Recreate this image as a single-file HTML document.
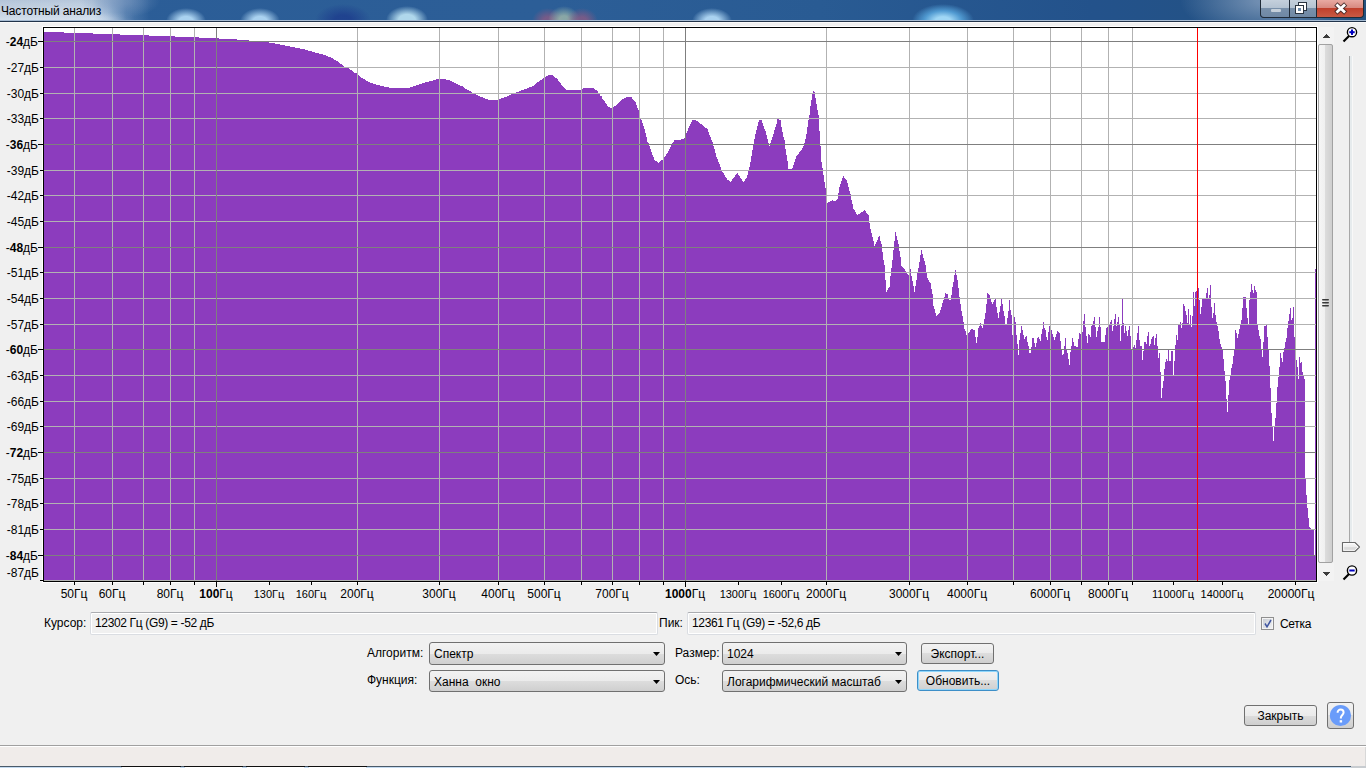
<!DOCTYPE html>
<html><head><meta charset="utf-8">
<style>
html,body{margin:0;padding:0;}
body{width:1366px;height:768px;overflow:hidden;position:relative;background:#f0f0f0;font-family:"Liberation Sans",sans-serif;font-size:12px;color:#000;}
.abs{position:absolute;}
.plot{position:absolute;left:0;top:0;}
/* title bar */
.tb{position:absolute;left:0;top:0;width:1366px;height:20px;overflow:hidden;
 background:#2b5b90;}
.tb .blob{position:absolute;border-radius:50%;}
.tbl1{position:absolute;left:0;top:20px;width:1366px;height:1px;background:#a6bbd2;}
.tbl2{position:absolute;left:0;top:21px;width:1366px;height:1px;background:#21334a;}
.title{position:absolute;left:1px;top:4px;font-size:12px;color:#000;white-space:nowrap;letter-spacing:-0.15px;}
.yl{position:absolute;left:0;width:39px;text-align:right;font-size:12px;line-height:16px;white-space:nowrap;}
.xl{position:absolute;top:586px;width:120px;text-align:center;font-size:12px;line-height:16px;white-space:nowrap;}
.xl.sm{font-size:11px;}
.lbl{position:absolute;font-size:12px;line-height:16px;white-space:nowrap;}
.field{position:absolute;box-sizing:border-box;border:1px solid #dadde2;border-top-color:#aaacb0;border-radius:2px;background:#f0f0f0;box-shadow:inset 0 0 0 1px #fff;}
.combo{position:absolute;box-sizing:border-box;border:1px solid #707070;border-radius:3px;
 background:linear-gradient(#f2f2f2 0%,#ebebeb 50%,#dddddd 50%,#cfcfcf 100%);}
.combo .arr{position:absolute;right:4px;top:9px;width:7px;height:4px;background:#000;clip-path:polygon(0 0,100% 0,50% 100%);}
.combo .txt{position:absolute;left:4px;top:3px;font-size:12px;line-height:16px;white-space:nowrap;}
.btn{position:absolute;box-sizing:border-box;border:1px solid #707070;border-radius:3px;text-align:center;font-size:12px;line-height:19px;padding-top:1px;
 background:linear-gradient(#f2f2f2 0%,#ebebeb 50%,#dddddd 50%,#cfcfcf 100%);}

.tb{background:linear-gradient(90deg,#2b5d97 0%,#2c5e97 40%,#295b93 60%,#23528b 80%,#24527f 100%);}
.tbtns{position:absolute;left:1260px;top:0;width:104px;height:18px;box-sizing:border-box;border:1px solid #1f2b38;border-top:none;border-radius:0 0 4px 4px;overflow:hidden;background:#1f2b38;}
.tbmin,.tbmax,.tbclose{position:absolute;top:0;height:17px;}
.tbmin{left:0;width:28px;background:linear-gradient(#c4d0dc 0%,#b4c3d2 45%,#7890aa 50%,#6f88a4 100%);}
.tbmax{left:29px;width:26px;background:linear-gradient(#c4d0dc 0%,#b4c3d2 45%,#7890aa 50%,#6f88a4 100%);}
.tbclose{left:56px;width:47px;background:linear-gradient(#e8aaa2 0%,#d88a80 45%,#c0402c 50%,#c85a44 100%);}
.ico-min{position:absolute;left:10px;top:9px;width:10px;height:3px;background:#c5d0da;border-radius:1px;}
.scr-btn{position:absolute;left:1318px;width:16px;background:#f3f3f3;}
.thumb{position:absolute;left:1318px;top:44px;width:15px;height:519px;box-sizing:border-box;border:1px solid #a2a2a2;border-radius:2px;
 background:linear-gradient(90deg,#f6f6f6 0%,#f0f0f0 45%,#dcdcdc 50%,#cfcfcf 100%);}
</style></head><body>
<div class="tb">
 <div class="abs" style="left:0;top:0;width:150px;height:20px;background:linear-gradient(90deg,rgba(196,210,226,1) 0%,rgba(200,214,230,1) 62%,rgba(185,205,228,.85) 72%,rgba(150,180,215,.35) 84%,rgba(150,180,215,0) 100%);"></div>
 <div class="abs" style="left:0;top:0;width:150px;height:20px;background:linear-gradient(rgba(150,172,200,.35) 0%,rgba(150,172,200,0) 45%,rgba(230,238,246,0) 60%,rgba(230,238,246,.45) 100%);-webkit-mask-image:linear-gradient(90deg,#000 0%,#000 65%,transparent 90%);mask-image:linear-gradient(90deg,#000 0%,#000 65%,transparent 90%);"></div>
 <div class="blob" style="left:80px;top:-16px;width:80px;height:34px;background:radial-gradient(closest-side,rgba(120,150,190,.6) 20%,rgba(120,150,190,0) 100%);"></div>
 <div class="blob" style="left:166px;top:8px;width:40px;height:26px;background:radial-gradient(closest-side,rgba(170,210,240,1) 35%,rgba(170,210,240,0) 100%);"></div>
 <div class="blob" style="left:240px;top:8px;width:40px;height:26px;background:radial-gradient(closest-side,rgba(170,210,240,1) 35%,rgba(170,210,240,0) 100%);"></div>
 <div class="blob" style="left:315px;top:4px;width:56px;height:32px;background:radial-gradient(closest-side,rgba(28,58,140,.75) 30%,rgba(28,58,140,0) 100%);"></div>
 <div class="blob" style="left:386px;top:6px;width:42px;height:28px;background:radial-gradient(closest-side,rgba(175,215,235,1) 40%,rgba(175,215,235,0) 100%);"></div>
 <div class="blob" style="left:532px;top:8px;width:32px;height:26px;background:radial-gradient(closest-side,rgba(150,90,130,.7) 30%,rgba(150,90,130,0) 100%);"></div>
 <div class="blob" style="left:548px;top:6px;width:32px;height:28px;background:radial-gradient(closest-side,rgba(160,185,170,.8) 30%,rgba(160,185,170,0) 100%);"></div>
 <div class="blob" style="left:566px;top:8px;width:32px;height:26px;background:radial-gradient(closest-side,rgba(150,90,130,.7) 30%,rgba(150,90,130,0) 100%);"></div>
 <div class="blob" style="left:692px;top:8px;width:40px;height:26px;background:radial-gradient(closest-side,rgba(170,210,240,1) 35%,rgba(170,210,240,0) 100%);"></div>
 <div class="blob" style="left:912px;top:4px;width:62px;height:34px;background:radial-gradient(closest-side,rgba(160,215,245,1) 25%,rgba(90,170,225,.8) 60%,rgba(90,170,225,0) 100%);"></div>
 <div class="blob" style="left:1180px;top:-40px;width:180px;height:80px;background:radial-gradient(closest-side,rgba(125,152,185,.85) 15%,rgba(125,152,185,0) 100%);"></div>
</div>
<div class="tbl1"></div><div class="tbl2"></div><div class="abs" style="left:0;top:22px;width:1366px;height:1px;background:#fbfaf9;"></div>
<div class="tbtns">
 <div class="tbmin"><div class="ico-min"></div></div>
 <div class="tbmax"><svg width="26" height="17" style="position:absolute;left:0;top:0" shape-rendering="crispEdges"><rect x="8.5" y="2.5" width="8" height="8" fill="#fff" stroke="#2a3440"/><rect x="5.5" y="5.5" width="8" height="8" fill="#fff" stroke="#2a3440"/><rect x="8" y="8" width="3" height="3" fill="#6c8aa8"/></svg></div>
 <div class="tbclose"><svg width="48" height="17" style="position:absolute;left:0;top:0"><path d="M20.5 5.5 L27 11.5 M27 5.5 L20.5 11.5" stroke="#3a2424" stroke-width="4.6" stroke-linecap="square" opacity="0.85"/><path d="M20.5 5.5 L27 11.5 M27 5.5 L20.5 11.5" stroke="#fff" stroke-width="2.8" stroke-linecap="square"/></svg></div>
</div>
<div class="title">Частотный анализ</div>

<svg class="plot" width="1366" height="600" viewBox="0 0 1366 600" shape-rendering="crispEdges">
<rect x="42" y="26" width="1276" height="557" fill="#fff"/>
<polygon points="44,32 45,32 45,32 46,32 46,32 47,32 47,32 48,32 48,32 49,32 49,32 50,32 50,32 51,32 51,32 52,32 52,32 53,32 53,32 54,32 54,32 55,32 55,32 56,32 56,32 57,32 57,32 58,32 58,32 59,32 59,32 60,32 60,32 61,32 61,32 62,32 62,32 63,32 63,32 64,32 64,33 65,33 65,33 66,33 66,33 67,33 67,33 68,33 68,33 69,33 69,33 70,33 70,33 71,33 71,33 72,33 72,33 73,33 73,33 74,33 74,33 75,33 75,33 76,33 76,33 77,33 77,33 78,33 78,33 79,33 79,33 80,33 80,33 81,33 81,33 82,33 82,33 83,33 83,33 84,33 84,33 85,33 85,33 86,33 86,33 87,33 87,33 88,33 88,33 89,33 89,33 90,33 90,33 91,33 91,33 92,33 92,33 93,33 93,34 94,34 94,34 95,34 95,34 96,34 96,34 97,34 97,34 98,34 98,34 99,34 99,34 100,34 100,34 101,34 101,34 102,34 102,34 103,34 103,34 104,34 104,34 105,34 105,34 106,34 106,34 107,34 107,34 108,34 108,34 109,34 109,34 110,34 110,34 111,34 111,34 112,34 112,34 113,34 113,34 114,34 114,34 115,34 115,34 116,34 116,34 117,34 117,34 118,34 118,34 119,34 119,34 120,34 120,35 121,35 121,35 122,35 122,35 123,35 123,35 124,35 124,35 125,35 125,35 126,35 126,35 127,35 127,35 128,35 128,35 129,35 129,35 130,35 130,35 131,35 131,35 132,35 132,35 133,35 133,35 134,35 134,35 135,35 135,35 136,35 136,35 137,35 137,35 138,35 138,35 139,35 139,35 140,35 140,35 141,35 141,35 142,35 142,35 143,35 143,35 144,35 144,35 145,35 145,35 146,35 146,35 147,35 147,35 148,35 148,35 149,35 149,36 150,36 150,36 151,36 151,36 152,36 152,36 153,36 153,36 154,36 154,36 155,36 155,36 156,36 156,36 157,36 157,36 158,36 158,36 159,36 159,36 160,36 160,36 161,36 161,36 162,36 162,36 163,36 163,36 164,36 164,36 165,36 165,36 166,36 166,36 167,36 167,36 168,36 168,36 169,36 169,36 170,36 170,36 171,36 171,36 172,36 172,36 173,36 173,36 174,36 174,36 175,36 175,37 176,37 176,37 177,37 177,37 178,37 178,37 179,37 179,37 180,37 180,37 181,37 181,37 182,37 182,37 183,37 183,37 184,37 184,37 185,37 185,37 186,37 186,37 187,37 187,37 188,37 188,37 189,37 189,37 190,37 190,37 191,37 191,37 192,37 192,37 193,37 193,37 194,37 194,37 195,37 195,37 196,37 196,37 197,37 197,37 198,37 198,37 199,37 199,38 200,38 200,38 201,38 201,38 202,38 202,38 203,38 203,38 204,38 204,38 205,38 205,38 206,38 206,38 207,38 207,38 208,38 208,38 209,38 209,38 210,38 210,38 211,38 211,38 212,38 212,38 213,38 213,38 214,38 214,38 215,38 215,38 216,38 216,38 217,38 217,38 218,38 218,38 219,38 219,39 220,39 220,39 221,39 221,39 222,39 222,39 223,39 223,39 224,39 224,39 225,39 225,39 226,39 226,39 227,39 227,39 228,39 228,39 229,39 229,39 230,39 230,39 231,39 231,39 232,39 232,39 233,39 233,39 234,39 234,39 235,39 235,39 236,39 236,39 237,39 237,40 238,40 238,40 239,40 239,40 240,40 240,40 241,40 241,40 242,40 242,40 243,40 243,40 244,40 244,40 245,40 245,40 246,40 246,40 247,40 247,40 248,40 248,40 249,40 249,41 250,41 250,41 251,41 251,41 252,41 252,41 253,41 253,41 254,41 254,41 255,41 255,41 256,41 256,41 257,41 257,41 258,41 258,41 259,41 259,41 260,41 260,41 261,41 261,41 262,41 262,41 263,41 263,41 264,41 264,41 265,41 265,41 266,41 266,41 267,41 267,41 268,41 268,41 269,41 269,43 270,43 270,43 271,43 271,43 272,43 272,43 273,43 273,43 274,43 274,43 275,43 275,44 276,44 276,44 277,44 277,44 278,44 278,44 279,44 279,44 280,44 280,45 281,45 281,45 282,45 282,45 283,45 283,45 284,45 284,45 285,45 285,46 286,46 286,46 287,46 287,46 288,46 288,46 289,46 289,46 290,46 290,47 291,47 291,47 292,47 292,47 293,47 293,47 294,47 294,47 295,47 295,48 296,48 296,48 297,48 297,48 298,48 298,48 299,48 299,48 300,48 300,49 301,49 301,49 302,49 302,49 303,49 303,49 304,49 304,49 305,49 305,50 306,50 306,50 307,50 307,50 308,50 308,51 309,51 309,51 310,51 310,51 311,51 311,51 312,51 312,52 313,52 313,52 314,52 314,52 315,52 315,53 316,53 316,53 317,53 317,53 318,53 318,53 319,53 319,54 320,54 320,54 321,54 321,54 322,54 322,54 323,54 323,55 324,55 324,55 325,55 325,55 326,55 326,56 327,56 327,56 328,56 328,57 329,57 329,57 330,57 330,57 331,57 331,58 332,58 332,58 333,58 333,59 334,59 334,60 335,60 335,60 336,60 336,61 337,61 337,61 338,61 338,62 339,62 339,63 340,63 340,64 341,64 341,64 342,64 342,65 343,65 343,66 344,66 344,67 345,67 345,67 346,67 346,67 347,67 347,68 348,68 348,68 349,68 349,69 350,69 350,70 351,70 351,70 352,70 352,71 353,71 353,72 354,72 354,73 355,73 355,73 356,73 356,73 357,73 357,74 358,74 358,75 359,75 359,76 360,76 360,77 361,77 361,78 362,78 362,78 363,78 363,79 364,79 364,79 365,79 365,80 366,80 366,81 367,81 367,81 368,81 368,82 369,82 369,82 370,82 370,83 371,83 371,83 372,83 372,83 373,83 373,84 374,84 374,84 375,84 375,84 376,84 376,85 377,85 377,85 378,85 378,85 379,85 379,85 380,85 380,86 381,86 381,86 382,86 382,86 383,86 383,86 384,86 384,87 385,87 385,87 386,87 386,87 387,87 387,87 388,87 388,87 389,87 389,88 390,88 390,88 391,88 391,88 392,88 392,88 393,88 393,88 394,88 394,88 395,88 395,88 396,88 396,88 397,88 397,88 398,88 398,88 399,88 399,88 400,88 400,88 401,88 401,88 402,88 402,88 403,88 403,88 404,88 404,88 405,88 405,88 406,88 406,88 407,88 407,88 408,88 408,88 409,88 409,88 410,88 410,87 411,87 411,87 412,87 412,87 413,87 413,86 414,86 414,86 415,86 415,86 416,86 416,85 417,85 417,85 418,85 418,85 419,85 419,84 420,84 420,84 421,84 421,84 422,84 422,83 423,83 423,83 424,83 424,83 425,83 425,82 426,82 426,82 427,82 427,82 428,82 428,82 429,82 429,81 430,81 430,81 431,81 431,81 432,81 432,81 433,81 433,80 434,80 434,80 435,80 435,80 436,80 436,79 437,79 437,79 438,79 438,79 439,79 439,79 440,79 440,79 441,79 441,79 442,79 442,79 443,79 443,79 444,79 444,79 445,79 445,79 446,79 446,80 447,80 447,80 448,80 448,80 449,80 449,80 450,80 450,81 451,81 451,81 452,81 452,82 453,82 453,82 454,82 454,83 455,83 455,83 456,83 456,84 457,84 457,84 458,84 458,85 459,85 459,85 460,85 460,86 461,86 461,86 462,86 462,86 463,86 463,87 464,87 464,88 465,88 465,89 466,89 466,89 467,89 467,90 468,90 468,90 469,90 469,91 470,91 470,91 471,91 471,92 472,92 472,93 473,93 473,93 474,93 474,94 475,94 475,94 476,94 476,95 477,95 477,95 478,95 478,96 479,96 479,96 480,96 480,97 481,97 481,97 482,97 482,97 483,97 483,98 484,98 484,98 485,98 485,99 486,99 486,99 487,99 487,99 488,99 488,100 489,100 489,100 490,100 490,100 491,100 491,100 492,100 492,100 493,100 493,100 494,100 494,100 495,100 495,100 496,100 496,100 497,100 497,100 498,100 498,100 499,100 499,99 500,99 500,99 501,99 501,98 502,98 502,98 503,98 503,98 504,98 504,97 505,97 505,97 506,97 506,97 507,97 507,96 508,96 508,96 509,96 509,95 510,95 510,95 511,95 511,94 512,94 512,94 513,94 513,93 514,93 514,93 515,93 515,93 516,93 516,92 517,92 517,92 518,92 518,92 519,92 519,91 520,91 520,91 521,91 521,90 522,90 522,90 523,90 523,90 524,90 524,89 525,89 525,89 526,89 526,89 527,89 527,88 528,88 528,88 529,88 529,87 530,87 530,87 531,87 531,87 532,87 532,86 533,86 533,86 534,86 534,85 535,85 535,84 536,84 536,83 537,83 537,82 538,82 538,82 539,82 539,81 540,81 540,80 541,80 541,80 542,80 542,79 543,79 543,78 544,78 544,78 545,78 545,77 546,77 546,76 547,76 547,76 548,76 548,75 549,75 549,75 550,75 550,75 551,75 551,75 552,75 552,75 553,75 553,76 554,76 554,77 555,77 555,78 556,78 556,78 557,78 557,79 558,79 558,81 559,81 559,82 560,82 560,83 561,83 561,85 562,85 562,86 563,86 563,87 564,87 564,88 565,88 565,89 566,89 566,90 567,90 567,90 568,90 568,90 569,90 569,90 570,90 570,90 571,90 571,90 572,90 572,90 573,90 573,90 574,90 574,90 575,90 575,90 576,90 576,90 577,90 577,90 578,90 578,90 579,90 579,90 580,90 580,90 581,90 581,89 582,89 582,89 583,89 583,88 584,88 584,88 585,88 585,88 586,88 586,88 587,88 587,88 588,88 588,88 589,88 589,88 590,88 590,88 591,88 591,88 592,88 592,88 593,88 593,88 594,88 594,89 595,89 595,90 596,90 596,90 597,90 597,91 598,91 598,93 599,93 599,94 600,94 600,96 601,96 601,96 602,96 602,99 603,99 603,100 604,100 604,101 605,101 605,103 606,103 606,104 607,104 607,106 608,106 608,107 609,107 609,107 610,107 610,108 611,108 611,108 612,108 612,108 613,108 613,107 614,107 614,106 615,106 615,106 616,106 616,105 617,105 617,104 618,104 618,103 619,103 619,102 620,102 620,101 621,101 621,100 622,100 622,99 623,99 623,99 624,99 624,98 625,98 625,98 626,98 626,97 627,97 627,97 628,97 628,97 629,97 629,97 630,97 630,97 631,97 631,97 632,97 632,99 633,99 633,100 634,100 634,101 635,101 635,102 636,102 636,105 637,105 637,108 638,108 638,110 639,110 639,114 640,114 640,118 641,118 641,120 642,120 642,123 643,123 643,126 644,126 644,129 645,129 645,133 646,133 646,137 647,137 647,142 648,142 648,143 649,143 649,146 650,146 650,149 651,149 651,152 652,152 652,155 653,155 653,157 654,157 654,160 655,160 655,161 656,161 656,161 657,161 657,162 658,162 658,163 659,163 659,162 660,162 660,161 661,161 661,160 662,160 662,160 663,160 663,158 664,158 664,157 665,157 665,156 666,156 666,154 667,154 667,153 668,153 668,151 669,151 669,149 670,149 670,147 671,147 671,145 672,145 672,143 673,143 673,142 674,142 674,140 675,140 675,140 676,140 676,140 677,140 677,140 678,140 678,140 679,140 679,140 680,140 680,140 681,140 681,139 682,139 682,139 683,139 683,139 684,139 684,138 685,138 685,137 686,137 686,133 687,133 687,131 688,131 688,128 689,128 689,126 690,126 690,124 691,124 691,122 692,122 692,120 693,120 693,120 694,120 694,120 695,120 695,120 696,120 696,121 697,121 697,121 698,121 698,122 699,122 699,123 700,123 700,124 701,124 701,124 702,124 702,125 703,125 703,126 704,126 704,127 705,127 705,128 706,128 706,128 707,128 707,129 708,129 708,132 709,132 709,135 710,135 710,137 711,137 711,140 712,140 712,142 713,142 713,146 714,146 714,149 715,149 715,153 716,153 716,157 717,157 717,159 718,159 718,162 719,162 719,164 720,164 720,167 721,167 721,170 722,170 722,172 723,172 723,173 724,173 724,175 725,175 725,177 726,177 726,178 727,178 727,180 728,180 728,180 729,180 729,181 730,181 730,182 731,182 731,181 732,181 732,179 733,179 733,178 734,178 734,177 735,177 735,175 736,175 736,174 737,174 737,173 738,173 738,175 739,175 739,176 740,176 740,178 741,178 741,179 742,179 742,181 743,181 743,182 744,182 744,181 745,181 745,179 746,179 746,178 747,178 747,175 748,175 748,171 749,171 749,167 750,167 750,162 751,162 751,156 752,156 752,150 753,150 753,144 754,144 754,139 755,139 755,134 756,134 756,130 757,130 757,126 758,126 758,122 759,122 759,120 760,120 760,120 761,120 761,120 762,120 762,123 763,123 763,126 764,126 764,129 765,129 765,131 766,131 766,135 767,135 767,139 768,139 768,143 769,143 769,146 770,146 770,143 771,143 771,140 772,140 772,137 773,137 773,134 774,134 774,130 775,130 775,127 776,127 776,124 777,124 777,119 778,119 778,119 779,119 779,120 780,120 780,120 781,120 781,127 782,127 782,132 783,132 783,137 784,137 784,140 785,140 785,149 786,149 786,155 787,155 787,161 788,161 788,169 789,169 789,169 790,169 790,169 791,169 791,169 792,169 792,168 793,168 793,165 794,165 794,162 795,162 795,159 796,159 796,156 797,156 797,155 798,155 798,154 799,154 799,152 800,152 800,151 801,151 801,150 802,150 802,148 803,148 803,146 804,146 804,143 805,143 805,139 806,139 806,134 807,134 807,127 808,127 808,120 809,120 809,115 810,115 810,106 811,106 811,100 812,100 812,94 813,94 813,91 814,91 814,92 815,92 815,98 816,98 816,104 817,104 817,110 818,110 818,115 819,115 819,131 820,131 820,146 821,146 821,162 822,162 822,168 823,168 823,175 824,175 824,182 825,182 825,188 826,188 826,193 827,193 827,203 828,203 828,202 829,202 829,202 830,202 830,201 831,201 831,201 832,201 832,200 833,200 833,201 834,201 834,201 835,201 835,201 836,201 836,200 837,200 837,199 838,199 838,193 839,193 839,187 840,187 840,184 841,184 841,181 842,181 842,178 843,178 843,176 844,176 844,178 845,178 845,179 846,179 846,180 847,180 847,183 848,183 848,187 849,187 849,191 850,191 850,194 851,194 851,200 852,200 852,204 853,204 853,209 854,209 854,210 855,210 855,212 856,212 856,214 857,214 857,215 858,215 858,214 859,214 859,214 860,214 860,213 861,213 861,212 862,212 862,212 863,212 863,211 864,211 864,210 865,210 865,211 866,211 866,213 867,213 867,214 868,214 868,215 869,215 869,223 870,223 870,229 871,229 871,233 872,233 872,237 873,237 873,241 874,241 874,246 875,246 875,244 876,244 876,242 877,242 877,240 878,240 878,237 879,237 879,236 880,236 880,241 881,241 881,244 882,244 882,252 883,252 883,260 884,260 884,265 885,265 885,280 886,280 886,292 887,292 887,290 888,290 888,288 889,288 889,287 890,287 890,276 891,276 891,268 892,268 892,260 893,260 893,250 894,250 894,241 895,241 895,232 896,232 896,236 897,236 897,240 898,240 898,244 899,244 899,251 900,251 900,257 901,257 901,266 902,266 902,267 903,267 903,268 904,268 904,269 905,269 905,271 906,271 906,272 907,272 907,274 908,274 908,275 909,275 909,271 910,271 910,269 911,269 911,276 912,276 912,281 913,281 913,286 914,286 914,292 915,292 915,286 916,286 916,280 917,280 917,272 918,272 918,268 919,268 919,262 920,262 920,255 921,255 921,250 922,250 922,254 923,254 923,258 924,258 924,261 925,261 925,265 926,265 926,272 927,272 927,278 928,278 928,280 929,280 929,282 930,282 930,283 931,283 931,289 932,289 932,294 933,294 933,306 934,306 934,309 935,309 935,313 936,313 936,316 937,316 937,315 938,315 938,314 939,314 939,313 940,313 940,310 941,310 941,307 942,307 942,303 943,303 943,300 944,300 944,297 945,297 945,293 946,293 946,294 947,294 947,294 948,294 948,299 949,299 949,300 950,300 950,300 951,300 951,295 952,295 952,287 953,287 953,282 954,282 954,275 955,275 955,270 956,270 956,275 957,275 957,280 958,280 958,288 959,288 959,297 960,297 960,304 961,304 961,311 962,311 962,316 963,316 963,322 964,322 964,329 965,329 965,331 966,331 966,335 967,335 967,336 968,336 968,333 969,333 969,332 970,332 970,330 971,330 971,329 972,329 972,329 973,329 973,330 974,330 974,330 975,330 975,337 976,337 976,343 977,343 977,337 978,337 978,328 979,328 979,326 980,326 980,323 981,323 981,326 982,326 982,328 983,328 983,324 984,324 984,319 985,319 985,313 986,313 986,304 987,304 987,293 988,293 988,294 989,294 989,295 990,295 990,298 991,298 991,302 992,302 992,304 993,304 993,302 994,302 994,300 995,300 995,299 996,299 996,307 997,307 997,313 998,313 998,318 999,318 999,312 1000,312 1000,306 1001,306 1001,299 1002,299 1002,304 1003,304 1003,311 1004,311 1004,316 1005,316 1005,324 1006,324 1006,324 1007,324 1007,318 1008,318 1008,311 1009,311 1009,300 1010,300 1010,310 1011,310 1011,315 1012,315 1012,335 1013,335 1013,324 1014,324 1014,317 1015,317 1015,322 1016,322 1016,335 1017,335 1017,344 1018,344 1018,355 1019,355 1019,340 1020,340 1020,333 1021,333 1021,326 1022,326 1022,330 1023,330 1023,335 1024,335 1024,339 1025,339 1025,337 1026,337 1026,336 1027,336 1027,342 1028,342 1028,346 1029,346 1029,353 1030,353 1030,353 1031,353 1031,347 1032,347 1032,338 1033,338 1033,338 1034,338 1034,343 1035,343 1035,347 1036,347 1036,343 1037,343 1037,338 1038,338 1038,337 1039,337 1039,339 1040,339 1040,341 1041,341 1041,334 1042,334 1042,329 1043,329 1043,322 1044,322 1044,328 1045,328 1045,330 1046,330 1046,337 1047,337 1047,340 1048,340 1048,332 1049,332 1049,326 1050,326 1050,328 1051,328 1051,330 1052,330 1052,334 1053,334 1053,337 1054,337 1054,340 1055,340 1055,337 1056,337 1056,334 1057,334 1057,331 1058,331 1058,332 1059,332 1059,333 1060,333 1060,341 1061,341 1061,349 1062,349 1062,355 1063,355 1063,354 1064,354 1064,346 1065,346 1065,338 1066,338 1066,349 1067,349 1067,353 1068,353 1068,359 1069,359 1069,365 1070,365 1070,352 1071,352 1071,346 1072,346 1072,338 1073,338 1073,342 1074,342 1074,346 1075,346 1075,346 1076,346 1076,347 1077,347 1077,347 1078,347 1078,339 1079,339 1079,333 1080,333 1080,334 1081,334 1081,334 1082,334 1082,332 1083,332 1083,321 1084,321 1084,314 1085,314 1085,327 1086,327 1086,336 1087,336 1087,343 1088,343 1088,334 1089,334 1089,335 1090,335 1090,337 1091,337 1091,326 1092,326 1092,324 1093,324 1093,321 1094,321 1094,317 1095,317 1095,327 1096,327 1096,337 1097,337 1097,331 1098,331 1098,327 1099,327 1099,317 1100,317 1100,327 1101,327 1101,342 1102,342 1102,342 1103,342 1103,342 1104,342 1104,342 1105,342 1105,335 1106,335 1106,328 1107,328 1107,327 1108,327 1108,326 1109,326 1109,325 1110,325 1110,322 1111,322 1111,320 1112,320 1112,331 1113,331 1113,326 1114,326 1114,319 1115,319 1115,314 1116,314 1116,326 1117,326 1117,322 1118,322 1118,317 1119,317 1119,325 1120,325 1120,341 1121,341 1121,326 1122,326 1122,299 1123,299 1123,323 1124,323 1124,333 1125,333 1125,326 1126,326 1126,331 1127,331 1127,336 1128,336 1128,330 1129,330 1129,326 1130,326 1130,336 1131,336 1131,349 1132,349 1132,349 1133,349 1133,347 1134,347 1134,345 1135,345 1135,348 1136,348 1136,340 1137,340 1137,333 1138,333 1138,326 1139,326 1139,340 1140,340 1140,346 1141,346 1141,346 1142,346 1142,360 1143,360 1143,351 1144,351 1144,342 1145,342 1145,342 1146,342 1146,344 1147,344 1147,336 1148,336 1148,332 1149,332 1149,346 1150,346 1150,344 1151,344 1151,339 1152,339 1152,337 1153,337 1153,336 1154,336 1154,345 1155,345 1155,338 1156,338 1156,334 1157,334 1157,346 1158,346 1158,358 1159,358 1159,353 1160,353 1160,372 1161,372 1161,398 1162,398 1162,388 1163,388 1163,381 1164,381 1164,369 1165,369 1165,362 1166,362 1166,359 1167,359 1167,361 1168,361 1168,350 1169,350 1169,361 1170,361 1170,361 1171,361 1171,351 1172,351 1172,351 1173,351 1173,375 1174,375 1174,361 1175,361 1175,345 1176,345 1176,335 1177,335 1177,340 1178,340 1178,325 1179,325 1179,325 1180,325 1180,322 1181,322 1181,328 1182,328 1182,323 1183,323 1183,304 1184,304 1184,306 1185,306 1185,311 1186,311 1186,315 1187,315 1187,323 1188,323 1188,309 1189,309 1189,324 1190,324 1190,315 1191,315 1191,327 1192,327 1192,316 1193,316 1193,292 1194,292 1194,306 1195,306 1195,292 1196,292 1196,291 1197,291 1197,290 1198,290 1198,288 1199,288 1199,300 1200,300 1200,314 1201,314 1201,307 1202,307 1202,299 1203,299 1203,299 1204,299 1204,299 1205,299 1205,299 1206,299 1206,293 1207,293 1207,288 1208,288 1208,298 1209,298 1209,295 1210,295 1210,285 1211,285 1211,307 1212,307 1212,318 1213,318 1213,313 1214,313 1214,303 1215,303 1215,315 1216,315 1216,322 1217,322 1217,326 1218,326 1218,331 1219,331 1219,339 1220,339 1220,344 1221,344 1221,347 1222,347 1222,350 1223,350 1223,359 1224,359 1224,371 1225,371 1225,381 1226,381 1226,399 1227,399 1227,412 1228,412 1228,395 1229,395 1229,380 1230,380 1230,376 1231,376 1231,368 1232,368 1232,364 1233,364 1233,356 1234,356 1234,350 1235,350 1235,330 1236,330 1236,333 1237,333 1237,338 1238,338 1238,334 1239,334 1239,329 1240,329 1240,324 1241,324 1241,320 1242,320 1242,308 1243,308 1243,297 1244,297 1244,297 1245,297 1245,297 1246,297 1246,308 1247,308 1247,318 1248,318 1248,325 1249,325 1249,300 1250,300 1250,292 1251,292 1251,284 1252,284 1252,290 1253,290 1253,293 1254,293 1254,286 1255,286 1255,290 1256,290 1256,292 1257,292 1257,325 1258,325 1258,330 1259,330 1259,336 1260,336 1260,339 1261,339 1261,350 1262,350 1262,357 1263,357 1263,342 1264,342 1264,326 1265,326 1265,326 1266,326 1266,325 1267,325 1267,337 1268,337 1268,350 1269,350 1269,366 1270,366 1270,388 1271,388 1271,413 1272,413 1272,426 1273,426 1273,441 1274,441 1274,427 1275,427 1275,418 1276,418 1276,403 1277,403 1277,387 1278,387 1278,377 1279,377 1279,367 1280,367 1280,353 1281,353 1281,358 1282,358 1282,362 1283,362 1283,352 1284,352 1284,348 1285,348 1285,342 1286,342 1286,338 1287,338 1287,328 1288,328 1288,321 1289,321 1289,314 1290,314 1290,308 1291,308 1291,320 1292,320 1292,318 1293,318 1293,307 1294,307 1294,337 1295,337 1295,349 1296,349 1296,360 1297,360 1297,367 1298,367 1298,379 1299,379 1299,357 1300,357 1300,363 1301,363 1301,362 1302,362 1302,372 1303,372 1303,375 1304,375 1304,379 1305,379 1305,479 1306,479 1306,495 1307,495 1307,508 1308,508 1308,518 1309,518 1309,527 1310,527 1310,528 1311,528 1311,529 1312,529 1312,529 1313,529 1313,529 1314,529 1314,555 1315,555 1315,269 1316,269 1316,581 44,581" fill="#8c3cbe"/>
<rect x="44" y="67" width="1272" height="1" fill="#b2b2b2"/>
<rect x="44" y="93" width="1272" height="1" fill="#b2b2b2"/>
<rect x="44" y="118" width="1272" height="1" fill="#b2b2b2"/>
<rect x="44" y="170" width="1272" height="1" fill="#b2b2b2"/>
<rect x="44" y="195" width="1272" height="1" fill="#b2b2b2"/>
<rect x="44" y="221" width="1272" height="1" fill="#b2b2b2"/>
<rect x="44" y="272" width="1272" height="1" fill="#b2b2b2"/>
<rect x="44" y="298" width="1272" height="1" fill="#b2b2b2"/>
<rect x="44" y="324" width="1272" height="1" fill="#b2b2b2"/>
<rect x="44" y="375" width="1272" height="1" fill="#b2b2b2"/>
<rect x="44" y="401" width="1272" height="1" fill="#b2b2b2"/>
<rect x="44" y="426" width="1272" height="1" fill="#b2b2b2"/>
<rect x="44" y="478" width="1272" height="1" fill="#b2b2b2"/>
<rect x="44" y="503" width="1272" height="1" fill="#b2b2b2"/>
<rect x="44" y="529" width="1272" height="1" fill="#b2b2b2"/>
<rect x="44" y="580" width="1272" height="1" fill="#b2b2b2"/>
<rect x="74" y="28" width="1" height="553" fill="#b2b2b2"/>
<rect x="112" y="28" width="1" height="553" fill="#b2b2b2"/>
<rect x="143" y="28" width="1" height="553" fill="#b2b2b2"/>
<rect x="170" y="28" width="1" height="553" fill="#b2b2b2"/>
<rect x="194" y="28" width="1" height="553" fill="#b2b2b2"/>
<rect x="357" y="28" width="1" height="553" fill="#b2b2b2"/>
<rect x="439" y="28" width="1" height="553" fill="#b2b2b2"/>
<rect x="498" y="28" width="1" height="553" fill="#b2b2b2"/>
<rect x="544" y="28" width="1" height="553" fill="#b2b2b2"/>
<rect x="581" y="28" width="1" height="553" fill="#b2b2b2"/>
<rect x="612" y="28" width="1" height="553" fill="#b2b2b2"/>
<rect x="639" y="28" width="1" height="553" fill="#b2b2b2"/>
<rect x="663" y="28" width="1" height="553" fill="#b2b2b2"/>
<rect x="826" y="28" width="1" height="553" fill="#b2b2b2"/>
<rect x="909" y="28" width="1" height="553" fill="#b2b2b2"/>
<rect x="967" y="28" width="1" height="553" fill="#b2b2b2"/>
<rect x="1013" y="28" width="1" height="553" fill="#b2b2b2"/>
<rect x="1050" y="28" width="1" height="553" fill="#b2b2b2"/>
<rect x="1081" y="28" width="1" height="553" fill="#b2b2b2"/>
<rect x="1108" y="28" width="1" height="553" fill="#b2b2b2"/>
<rect x="1132" y="28" width="1" height="553" fill="#b2b2b2"/>
<rect x="1295" y="28" width="1" height="553" fill="#b2b2b2"/>
<rect x="44" y="41" width="1272" height="1" fill="#7f7f7f"/>
<rect x="44" y="144" width="1272" height="1" fill="#7f7f7f"/>
<rect x="44" y="247" width="1272" height="1" fill="#7f7f7f"/>
<rect x="44" y="349" width="1272" height="1" fill="#7f7f7f"/>
<rect x="44" y="452" width="1272" height="1" fill="#7f7f7f"/>
<rect x="44" y="555" width="1272" height="1" fill="#7f7f7f"/>
<rect x="216" y="28" width="1" height="553" fill="#7f7f7f"/>
<rect x="685" y="28" width="1" height="553" fill="#7f7f7f"/>
<rect x="1197" y="28" width="1" height="553" fill="#ff0000"/>
<rect x="43" y="27" width="1274" height="1" fill="#000"/>
<rect x="43" y="581" width="1274" height="1" fill="#000"/>
<rect x="43" y="27" width="1" height="555" fill="#000"/>
<rect x="1316" y="27" width="1" height="555" fill="#000"/>
<rect x="38" y="41" width="5" height="1" fill="#000"/>
<rect x="40" y="67" width="3" height="1" fill="#000"/>
<rect x="40" y="93" width="3" height="1" fill="#000"/>
<rect x="40" y="118" width="3" height="1" fill="#000"/>
<rect x="38" y="144" width="5" height="1" fill="#000"/>
<rect x="40" y="170" width="3" height="1" fill="#000"/>
<rect x="40" y="195" width="3" height="1" fill="#000"/>
<rect x="40" y="221" width="3" height="1" fill="#000"/>
<rect x="38" y="247" width="5" height="1" fill="#000"/>
<rect x="40" y="272" width="3" height="1" fill="#000"/>
<rect x="40" y="298" width="3" height="1" fill="#000"/>
<rect x="40" y="324" width="3" height="1" fill="#000"/>
<rect x="38" y="349" width="5" height="1" fill="#000"/>
<rect x="40" y="375" width="3" height="1" fill="#000"/>
<rect x="40" y="401" width="3" height="1" fill="#000"/>
<rect x="40" y="426" width="3" height="1" fill="#000"/>
<rect x="38" y="452" width="5" height="1" fill="#000"/>
<rect x="40" y="478" width="3" height="1" fill="#000"/>
<rect x="40" y="503" width="3" height="1" fill="#000"/>
<rect x="40" y="529" width="3" height="1" fill="#000"/>
<rect x="38" y="555" width="5" height="1" fill="#000"/>
<rect x="40" y="580" width="3" height="1" fill="#000"/>
<rect x="74" y="582" width="1" height="3" fill="#000"/>
<rect x="112" y="582" width="1" height="3" fill="#000"/>
<rect x="143" y="582" width="1" height="3" fill="#000"/>
<rect x="170" y="582" width="1" height="3" fill="#000"/>
<rect x="194" y="582" width="1" height="3" fill="#000"/>
<rect x="216" y="582" width="1" height="5" fill="#000"/>
<rect x="269" y="582" width="1" height="3" fill="#000"/>
<rect x="311" y="582" width="1" height="3" fill="#000"/>
<rect x="357" y="582" width="1" height="3" fill="#000"/>
<rect x="439" y="582" width="1" height="3" fill="#000"/>
<rect x="498" y="582" width="1" height="3" fill="#000"/>
<rect x="544" y="582" width="1" height="3" fill="#000"/>
<rect x="581" y="582" width="1" height="3" fill="#000"/>
<rect x="612" y="582" width="1" height="3" fill="#000"/>
<rect x="639" y="582" width="1" height="3" fill="#000"/>
<rect x="663" y="582" width="1" height="3" fill="#000"/>
<rect x="685" y="582" width="1" height="5" fill="#000"/>
<rect x="738" y="582" width="1" height="3" fill="#000"/>
<rect x="781" y="582" width="1" height="3" fill="#000"/>
<rect x="826" y="582" width="1" height="3" fill="#000"/>
<rect x="909" y="582" width="1" height="3" fill="#000"/>
<rect x="967" y="582" width="1" height="3" fill="#000"/>
<rect x="1013" y="582" width="1" height="3" fill="#000"/>
<rect x="1050" y="582" width="1" height="3" fill="#000"/>
<rect x="1081" y="582" width="1" height="3" fill="#000"/>
<rect x="1108" y="582" width="1" height="3" fill="#000"/>
<rect x="1132" y="582" width="1" height="3" fill="#000"/>
<rect x="1173" y="582" width="1" height="3" fill="#000"/>
<rect x="1222" y="582" width="1" height="3" fill="#000"/>
<rect x="1295" y="582" width="1" height="3" fill="#000"/>
</svg>
<div class="yl" style="top:34px;width:38px;">-<b>24</b>дБ</div>
<div class="yl" style="top:60px;">-27дБ</div>
<div class="yl" style="top:86px;">-30дБ</div>
<div class="yl" style="top:111px;">-33дБ</div>
<div class="yl" style="top:137px;width:38px;">-<b>36</b>дБ</div>
<div class="yl" style="top:163px;">-39дБ</div>
<div class="yl" style="top:188px;">-42дБ</div>
<div class="yl" style="top:214px;">-45дБ</div>
<div class="yl" style="top:240px;width:38px;">-<b>48</b>дБ</div>
<div class="yl" style="top:265px;">-51дБ</div>
<div class="yl" style="top:291px;">-54дБ</div>
<div class="yl" style="top:317px;">-57дБ</div>
<div class="yl" style="top:342px;width:38px;">-<b>60</b>дБ</div>
<div class="yl" style="top:368px;">-63дБ</div>
<div class="yl" style="top:394px;">-66дБ</div>
<div class="yl" style="top:419px;">-69дБ</div>
<div class="yl" style="top:445px;width:38px;">-<b>72</b>дБ</div>
<div class="yl" style="top:471px;">-75дБ</div>
<div class="yl" style="top:496px;">-78дБ</div>
<div class="yl" style="top:522px;">-81дБ</div>
<div class="yl" style="top:548px;width:38px;">-<b>84</b>дБ</div>
<div class="yl" style="top:565px;">-87дБ</div>
<div class="xl" style="left:14px">50Гц</div>
<div class="xl" style="left:52px">60Гц</div>
<div class="xl" style="left:110px">80Гц</div>
<div class="xl" style="left:156px"><b>100</b>Гц</div>
<div class="xl sm" style="left:209px">130Гц</div>
<div class="xl sm" style="left:251px">160Гц</div>
<div class="xl" style="left:297px">200Гц</div>
<div class="xl" style="left:379px">300Гц</div>
<div class="xl" style="left:438px">400Гц</div>
<div class="xl" style="left:484px">500Гц</div>
<div class="xl" style="left:552px">700Гц</div>
<div class="xl" style="left:625px"><b>1000</b>Гц</div>
<div class="xl sm" style="left:678px">1300Гц</div>
<div class="xl sm" style="left:721px">1600Гц</div>
<div class="xl" style="left:766px">2000Гц</div>
<div class="xl" style="left:849px">3000Гц</div>
<div class="xl" style="left:907px">4000Гц</div>
<div class="xl" style="left:990px">6000Гц</div>
<div class="xl" style="left:1048px">8000Гц</div>
<div class="xl sm" style="left:1113px">11000Гц</div>
<div class="xl sm" style="left:1162px">14000Гц</div>
<div class="xl" style="left:1231px">20000Гц</div>

<div class="lbl" style="left:44px;top:615px;">Курсор:</div>
<div class="field" style="left:90px;top:612px;width:568px;height:23px;"><span class="lbl" style="left:4px;top:2px;letter-spacing:-0.35px;">12302 Гц (G9) = -52 дБ</span></div>
<div class="lbl" style="left:659px;top:615px;">Пик:</div>
<div class="field" style="left:687px;top:612px;width:569px;height:23px;"><span class="lbl" style="left:4px;top:2px;letter-spacing:-0.35px;">12361 Гц (G9) = -52,6 дБ</span></div>

<div class="lbl" style="left:367px;top:645px;">Алгоритм:</div>
<div class="combo" style="left:429px;top:642px;width:236px;height:23px;"><span class="txt">Спектр</span><span class="arr"></span></div>
<div class="lbl" style="left:675px;top:645px;">Размер:</div>
<div class="combo" style="left:722px;top:642px;width:185px;height:23px;"><span class="txt">1024</span><span class="arr"></span></div>
<div class="btn" style="left:921px;top:643px;width:73px;height:21px;">Экспорт...</div>

<div class="lbl" style="left:367px;top:672px;">Функция:</div>
<div class="combo" style="left:429px;top:670px;width:236px;height:22px;"><span class="txt" style="white-space:pre">Ханна  окно</span><span class="arr"></span></div>
<div class="lbl" style="left:675px;top:672px;">Ось:</div>
<div class="combo" style="left:722px;top:670px;width:185px;height:22px;"><span class="txt">Логарифмический масштаб</span><span class="arr"></span></div>
<div class="btn" style="left:917px;top:670px;width:82px;height:21px;border-color:#3d8fc8;box-shadow:inset 0 0 0 1px #8fd6fb;">Обновить...</div>

<div class="btn" style="left:1244px;top:705px;width:73px;height:21px;">Закрыть</div>


<div class="scr-btn" style="top:27px;height:17px;"></div>
<div class="scr-btn" style="top:563px;height:18px;"></div>
<svg class="abs" style="left:1318px;top:27px" width="16" height="555" shape-rendering="crispEdges">
 <path d="M4.8 11 L12.2 11 L8.5 6.8 Z" fill="#3c3c3c"/>
 <path d="M4.8 545 L12.2 545 L8.5 549 Z" fill="#3c3c3c"/>
</svg>
<div class="thumb"></div>
<svg class="abs" style="left:1318px;top:295px" width="16" height="15">
 <rect x="4" y="4" width="7" height="1.6" rx="0.8" fill="#3a3a3a"/>
 <rect x="4" y="7" width="7" height="1.6" rx="0.8" fill="#3a3a3a"/>
 <rect x="4" y="10" width="7" height="1.6" rx="0.8" fill="#3a3a3a"/>
</svg>
<svg class="abs" style="left:1338px;top:24px" width="26" height="22">
 <line x1="5.5" y1="17.5" x2="11" y2="12" stroke="#000" stroke-width="2.1"/>
 <circle cx="14" cy="8.2" r="4.6" fill="#fff" stroke="#000" stroke-width="1.4"/>
 <rect x="11.3" y="7.2" width="5.4" height="2" fill="#0000c0"/>
 <rect x="13" y="5.5" width="2" height="5.4" fill="#0000c0"/>
</svg>
<div class="abs" style="left:1349px;top:56px;width:1px;height:487px;background:#a8a8a8;"></div><div class="abs" style="left:1350px;top:56px;width:2px;height:487px;background:#e6ebed;"></div><div class="abs" style="left:1352px;top:56px;width:1px;height:487px;background:#f8f8f8;"></div>
<svg class="abs" style="left:1340px;top:540px" width="24" height="14">
 <defs><linearGradient id="sg" x1="0" y1="0" x2="0" y2="1"><stop offset="0" stop-color="#f6f6f6"/><stop offset="0.45" stop-color="#eeeeee"/><stop offset="0.55" stop-color="#dddddd"/><stop offset="1" stop-color="#d4d4d4"/></linearGradient></defs><path d="M2.5 2.5 L15 2.5 L19.5 7 L15 11.5 L2.5 11.5 Z" fill="url(#sg)" stroke="#6a6a6a" stroke-width="1.1" stroke-linejoin="round"/><path d="M3.7 3.7 L14.5 3.7 L18 7 L14.5 10.3 L3.7 10.3 Z" fill="none" stroke="#fff" stroke-width="0.9" opacity="0.9"/>
</svg>
<svg class="abs" style="left:1338px;top:562px" width="26" height="22">
 <line x1="5.5" y1="17.5" x2="11" y2="12" stroke="#000" stroke-width="2.1"/>
 <circle cx="14" cy="8.5" r="4.6" fill="#fff" stroke="#000" stroke-width="1.4"/>
 <rect x="11.3" y="7.5" width="5.4" height="2" fill="#0000c0"/>
</svg>
<svg class="abs" style="left:1261px;top:617px" width="14" height="15" shape-rendering="crispEdges">
 <rect x="0.5" y="0.5" width="12" height="12" fill="#f4f4f4" stroke="#8f8f8f"/>
 <defs><linearGradient id="cbg" x1="0" y1="0" x2="1" y2="1"><stop offset="0" stop-color="#c9cdd4"/><stop offset="1" stop-color="#f0f1f3"/></linearGradient></defs><rect x="2" y="2" width="9" height="9" fill="url(#cbg)"/>
</svg>
<svg class="abs" style="left:1261px;top:617px" width="14" height="15">
 <path d="M4 6.5 L6 9.8 L10 3" fill="none" stroke="#3f55a0" stroke-width="1.5"/>
</svg>
<div class="lbl" style="left:1280px;top:616px;letter-spacing:-0.3px;">Сетка</div>
<div class="btn" style="left:1327px;top:702px;width:27px;height:27px;"></div>
<svg class="abs" style="left:1327px;top:702px" width="27" height="27">
 <circle cx="13.5" cy="13.5" r="10.6" fill="#6a9cfa"/>
 <path d="M10.6 10.8 C10.6 8.6 12 7.6 13.6 7.6 C15.4 7.6 16.6 8.8 16.6 10.5 C16.6 12.6 14.3 13.1 13.9 15.2 L13.9 16.6" fill="none" stroke="#fff" stroke-width="2"/>
 <rect x="12.7" y="18.2" width="2.4" height="2.3" fill="#fff"/>
</svg>
<div class="abs" style="left:0;top:745px;width:1366px;height:1px;background:#a0a0a0;"></div>
<div class="abs" style="left:0;top:746px;width:1366px;height:1px;background:#fff;"></div>
<div class="abs" style="left:0;top:747px;width:1366px;height:19px;background:#f0ecea;"></div>
<div class="abs" style="left:1365px;top:747px;width:1px;height:19px;background:#d8d8d8;"></div>
<div class="abs" style="left:0;top:766px;width:1366px;height:1px;background:#4a5a6a;"></div>
<div class="abs" style="left:0;top:767px;width:1366px;height:1px;background:#c4daf0;"></div>
<div class="abs" style="left:121px;top:766px;width:60px;height:1px;background:#101010;"></div><div class="abs" style="left:122px;top:767px;width:58px;height:1px;background:#fff;"></div>
<div class="abs" style="left:184px;top:766px;width:59px;height:1px;background:#101010;"></div><div class="abs" style="left:185px;top:767px;width:57px;height:1px;background:#fff;"></div>
<div class="abs" style="left:246px;top:766px;width:59px;height:1px;background:#101010;"></div><div class="abs" style="left:247px;top:767px;width:57px;height:1px;background:#fff;"></div>
<div class="abs" style="left:308px;top:766px;width:59px;height:1px;background:#101010;"></div><div class="abs" style="left:309px;top:767px;width:57px;height:1px;background:#fff;"></div>
<div class="abs" style="left:1351px;top:766px;width:15px;height:2px;background:#c8ccd0;"></div>
</body></html>
